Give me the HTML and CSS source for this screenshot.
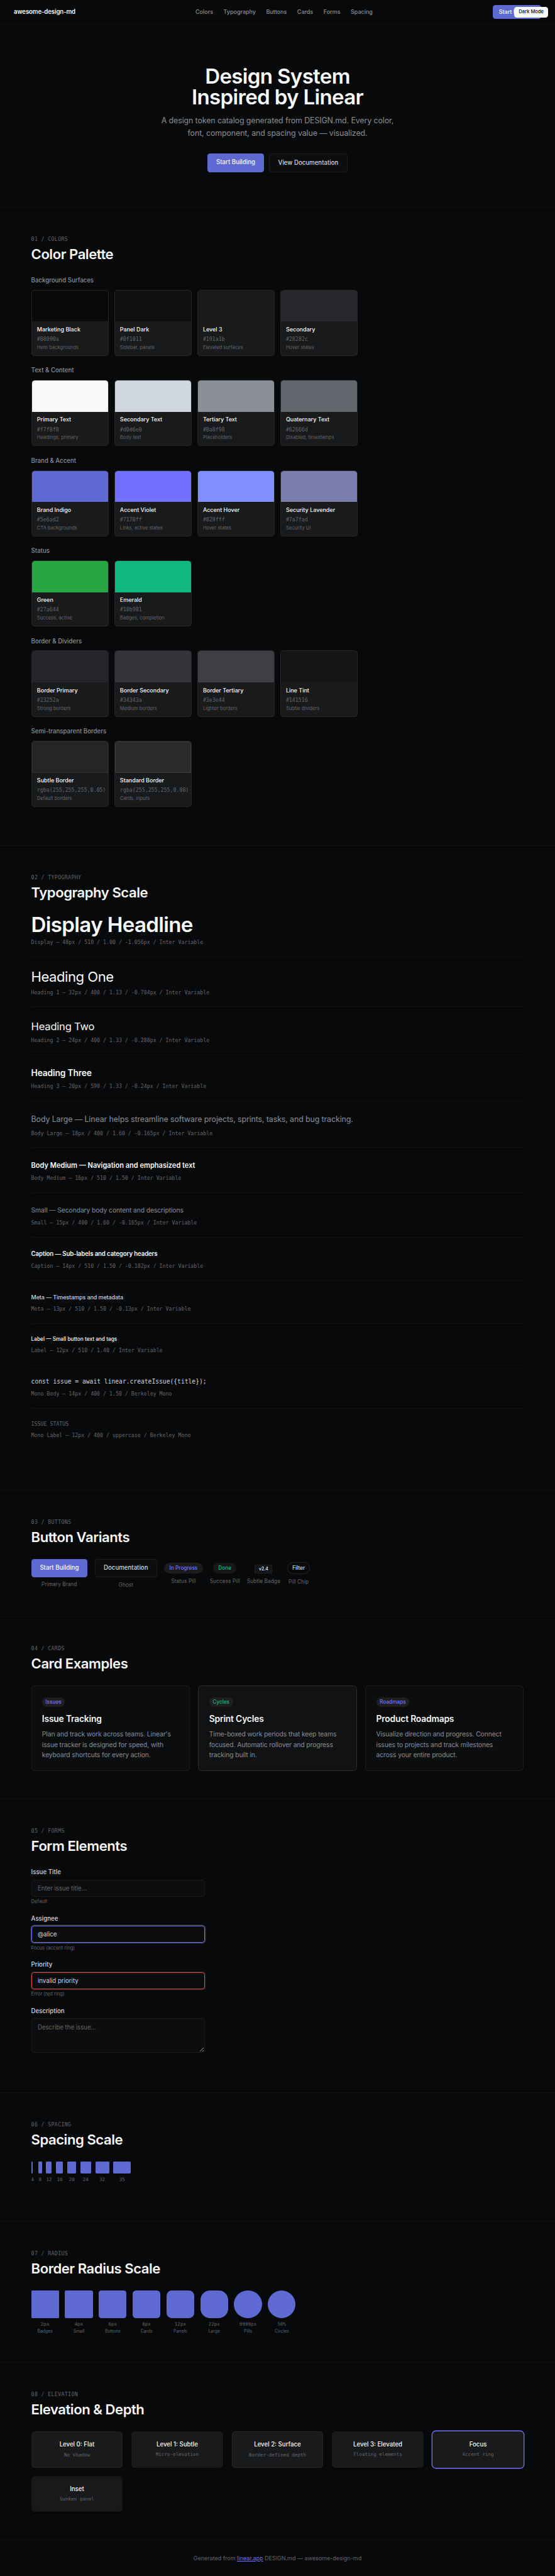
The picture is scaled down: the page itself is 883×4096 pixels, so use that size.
FILE: index.html
```html
<!DOCTYPE html>
<html lang="en">
<head>
    <meta charset="UTF-8">
    <meta name="viewport" content="width=device-width, initial-scale=1.0">
    <title>Design System Inspired by Linear</title>
    <link rel="stylesheet" href="styles.css">
</head>
<body>
<div class="page">
    <nav class="nav">
        <div class="nav-brand">awesome-design-md</div>
        <ul class="nav-links">
            <li><a href="#colors">Colors</a></li>
            <li><a href="#typography">Typography</a></li>
            <li><a href="#buttons">Buttons</a></li>
            <li><a href="#cards">Cards</a></li>
            <li><a href="#forms">Forms</a></li>
            <li><a href="#spacing">Spacing</a></li>
        </ul>
        <a class="nav-cta" href="#">Start Building</a>
    </nav>
    <button class="theme-toggle">Dark Mode</button>

    <header class="hero">
        <h1>Design System<br>Inspired by Linear</h1>
        <p>A design token catalog generated from DESIGN.md. Every color, font, component, and spacing value — visualized.</p>
        <div class="hero-buttons">
            <a class="btn btn-primary" href="#">Start Building</a>
            <a class="btn btn-ghost" href="#">View Documentation</a>
        </div>
    </header>
    <hr class="divider">

    <section class="section" id="colors">
        <div class="section-label">01 / Colors</div>
        <h2>Color Palette</h2>

        <h3 class="group-title">Background Surfaces</h3>
        <div class="color-grid">
            <div class="swatch"><div class="swatch-color marketing-black"></div><div class="swatch-info"><div class="swatch-name">Marketing Black</div><div class="swatch-hex">#08090a</div><div class="swatch-role">Hero backgrounds</div></div></div>
            <div class="swatch"><div class="swatch-color panel-dark"></div><div class="swatch-info"><div class="swatch-name">Panel Dark</div><div class="swatch-hex">#0f1011</div><div class="swatch-role">Sidebar, panels</div></div></div>
            <div class="swatch"><div class="swatch-color level-3"></div><div class="swatch-info"><div class="swatch-name">Level 3</div><div class="swatch-hex">#191a1b</div><div class="swatch-role">Elevated surfaces</div></div></div>
            <div class="swatch"><div class="swatch-color secondary"></div><div class="swatch-info"><div class="swatch-name">Secondary</div><div class="swatch-hex">#28282c</div><div class="swatch-role">Hover states</div></div></div>
        </div>

        <h3 class="group-title">Text &amp; Content</h3>
        <div class="color-grid">
            <div class="swatch"><div class="swatch-color text-primary"></div><div class="swatch-info"><div class="swatch-name">Primary Text</div><div class="swatch-hex">#f7f8f8</div><div class="swatch-role">Headings, primary</div></div></div>
            <div class="swatch"><div class="swatch-color text-secondary"></div><div class="swatch-info"><div class="swatch-name">Secondary Text</div><div class="swatch-hex">#d0d6e0</div><div class="swatch-role">Body text</div></div></div>
            <div class="swatch"><div class="swatch-color text-tertiary"></div><div class="swatch-info"><div class="swatch-name">Tertiary Text</div><div class="swatch-hex">#8a8f98</div><div class="swatch-role">Placeholders</div></div></div>
            <div class="swatch"><div class="swatch-color text-quaternary"></div><div class="swatch-info"><div class="swatch-name">Quaternary Text</div><div class="swatch-hex">#62666d</div><div class="swatch-role">Disabled, timestamps</div></div></div>
        </div>

        <h3 class="group-title">Brand &amp; Accent</h3>
        <div class="color-grid">
            <div class="swatch"><div class="swatch-color indigo"></div><div class="swatch-info"><div class="swatch-name">Brand Indigo</div><div class="swatch-hex">#5e6ad2</div><div class="swatch-role">CTA backgrounds</div></div></div>
            <div class="swatch"><div class="swatch-color violet"></div><div class="swatch-info"><div class="swatch-name">Accent Violet</div><div class="swatch-hex">#7170ff</div><div class="swatch-role">Links, active states</div></div></div>
            <div class="swatch"><div class="swatch-color accent-hover"></div><div class="swatch-info"><div class="swatch-name">Accent Hover</div><div class="swatch-hex">#828fff</div><div class="swatch-role">Hover states</div></div></div>
            <div class="swatch"><div class="swatch-color lavender"></div><div class="swatch-info"><div class="swatch-name">Security Lavender</div><div class="swatch-hex">#7a7fad</div><div class="swatch-role">Security UI</div></div></div>
        </div>

        <h3 class="group-title">Status</h3>
        <div class="color-grid">
            <div class="swatch"><div class="swatch-color green"></div><div class="swatch-info"><div class="swatch-name">Green</div><div class="swatch-hex">#27a644</div><div class="swatch-role">Success, active</div></div></div>
            <div class="swatch"><div class="swatch-color emerald"></div><div class="swatch-info"><div class="swatch-name">Emerald</div><div class="swatch-hex">#10b981</div><div class="swatch-role">Badges, completion</div></div></div>
        </div>

        <h3 class="group-title">Border &amp; Dividers</h3>
        <div class="color-grid">
            <div class="swatch"><div class="swatch-color border-primary"></div><div class="swatch-info"><div class="swatch-name">Border Primary</div><div class="swatch-hex">#23252a</div><div class="swatch-role">Strong borders</div></div></div>
            <div class="swatch"><div class="swatch-color border-secondary"></div><div class="swatch-info"><div class="swatch-name">Border Secondary</div><div class="swatch-hex">#34343a</div><div class="swatch-role">Medium borders</div></div></div>
            <div class="swatch"><div class="swatch-color border-tertiary"></div><div class="swatch-info"><div class="swatch-name">Border Tertiary</div><div class="swatch-hex">#3e3e44</div><div class="swatch-role">Lighter borders</div></div></div>
            <div class="swatch"><div class="swatch-color line-tint"></div><div class="swatch-info"><div class="swatch-name">Line Tint</div><div class="swatch-hex">#141516</div><div class="swatch-role">Subtle dividers</div></div></div>
        </div>

        <h3 class="group-title">Semi-transparent Borders</h3>
        <div class="color-grid">
            <div class="swatch"><div class="swatch-color subtle-border"></div><div class="swatch-info"><div class="swatch-name">Subtle Border</div><div class="swatch-hex">rgba(255,255,255,0.05)</div><div class="swatch-role">Default borders</div></div></div>
            <div class="swatch"><div class="swatch-color standard-border"></div><div class="swatch-info"><div class="swatch-name">Standard Border</div><div class="swatch-hex">rgba(255,255,255,0.08)</div><div class="swatch-role">Cards, inputs</div></div></div>
        </div>
    </section>
    <hr class="divider">

    <section class="section" id="typography">
        <div class="section-label">02 / Typography</div>
        <h2>Typography Scale</h2>
        <div class="type-item"><div class="type-display">Display Headline</div><div class="type-meta">Display — 48px / 510 / 1.00 / -1.056px / Inter Variable</div></div>
        <div class="type-item"><div class="type-h1">Heading One</div><div class="type-meta">Heading 1 — 32px / 400 / 1.13 / -0.704px / Inter Variable</div></div>
        <div class="type-item"><div class="type-h2">Heading Two</div><div class="type-meta">Heading 2 — 24px / 400 / 1.33 / -0.288px / Inter Variable</div></div>
        <div class="type-item"><div class="type-h3">Heading Three</div><div class="type-meta">Heading 3 — 20px / 590 / 1.33 / -0.24px / Inter Variable</div></div>
        <div class="type-item"><div class="type-body-lg">Body Large — Linear helps streamline software projects, sprints, tasks, and bug tracking.</div><div class="type-meta">Body Large — 18px / 400 / 1.60 / -0.165px / Inter Variable</div></div>
        <div class="type-item"><div class="type-body-md">Body Medium — Navigation and emphasized text</div><div class="type-meta">Body Medium — 16px / 510 / 1.50 / Inter Variable</div></div>
        <div class="type-item"><div class="type-small">Small — Secondary body content and descriptions</div><div class="type-meta">Small — 15px / 400 / 1.60 / -0.165px / Inter Variable</div></div>
        <div class="type-item"><div class="type-caption">Caption — Sub-labels and category headers</div><div class="type-meta">Caption — 14px / 510 / 1.50 / -0.182px / Inter Variable</div></div>
        <div class="type-item"><div class="type-metadata">Meta — Timestamps and metadata</div><div class="type-meta">Meta — 13px / 510 / 1.50 / -0.13px / Inter Variable</div></div>
        <div class="type-item"><div class="type-label">Label — Small button text and tags</div><div class="type-meta">Label — 12px / 510 / 1.40 / Inter Variable</div></div>
        <div class="type-item"><div class="type-mono">const issue = await linear.createIssue({title});</div><div class="type-meta">Mono Body — 14px / 400 / 1.50 / Berkeley Mono</div></div>
        <div class="type-item"><div class="type-mono-label">Issue Status</div><div class="type-meta">Mono Label — 12px / 400 / uppercase / Berkeley Mono</div></div>
    </section>
    <hr class="divider">

    <section class="section" id="buttons">
        <div class="section-label">03 / Buttons</div>
        <h2>Button Variants</h2>
        <div class="button-row">
            <div class="button-item"><a class="btn btn-primary" href="#">Start Building</a><div class="button-label">Primary Brand</div></div>
            <div class="button-item"><a class="btn btn-ghost" href="#">Documentation</a><div class="button-label">Ghost</div></div>
            <div class="button-item"><span class="pill pill-accent">In Progress</span><div class="button-label">Status Pill</div></div>
            <div class="button-item"><span class="pill pill-success">Done</span><div class="button-label">Success Pill</div></div>
            <div class="button-item"><span class="badge">v2.4</span><div class="button-label">Subtle Badge</div></div>
            <div class="button-item"><span class="chip">Filter</span><div class="button-label">Pill Chip</div></div>
        </div>
    </section>
    <hr class="divider">

    <section class="section" id="cards">
        <div class="section-label">04 / Cards</div>
        <h2>Card Examples</h2>
        <div class="card-grid">
            <div class="card">
                <div class="card-tag"><span class="pill pill-accent pill-sm">Issues</span></div>
                <h3>Issue Tracking</h3>
                <p>Plan and track work across teams. Linear's issue tracker is designed for speed, with keyboard shortcuts for every action.</p>
            </div>
            <div class="card card-featured">
                <div class="card-tag"><span class="pill pill-success pill-sm">Cycles</span></div>
                <h3>Sprint Cycles</h3>
                <p>Time-boxed work periods that keep teams focused. Automatic rollover and progress tracking built in.</p>
            </div>
            <div class="card">
                <div class="card-tag"><span class="pill pill-accent pill-sm">Roadmaps</span></div>
                <h3>Product Roadmaps</h3>
                <p>Visualize direction and progress. Connect issues to projects and track milestones across your entire product.</p>
            </div>
        </div>
    </section>
    <hr class="divider">

    <section class="section" id="forms">
        <div class="section-label">05 / Forms</div>
        <h2>Form Elements</h2>
        <div class="form">
            <div class="form-group">
                <label for="title">Issue Title</label>
                <input type="text" id="title" placeholder="Enter issue title...">
                <div class="form-hint">Default</div>
            </div>
            <div class="form-group">
                <label for="assignee">Assignee</label>
                <input type="text" id="assignee" class="is-focus" value="@alice">
                <div class="form-hint">Focus (accent ring)</div>
            </div>
            <div class="form-group">
                <label for="priority">Priority</label>
                <input type="text" id="priority" class="is-error" value="invalid priority">
                <div class="form-hint">Error (red ring)</div>
            </div>
            <div class="form-group">
                <label for="description">Description</label>
                <textarea id="description" placeholder="Describe the issue..."></textarea>
            </div>
        </div>
    </section>
    <hr class="divider">

    <section class="section" id="spacing">
        <div class="section-label">06 / Spacing</div>
        <h2>Spacing Scale</h2>
        <div class="spacing-row">
            <div class="spacing-item"><div class="spacing-bar" style="width: 4px"></div><span>4</span></div>
            <div class="spacing-item"><div class="spacing-bar" style="width: 8px"></div><span>8</span></div>
            <div class="spacing-item"><div class="spacing-bar" style="width: 12px"></div><span>12</span></div>
            <div class="spacing-item"><div class="spacing-bar" style="width: 16px"></div><span>16</span></div>
            <div class="spacing-item"><div class="spacing-bar" style="width: 20px"></div><span>20</span></div>
            <div class="spacing-item"><div class="spacing-bar" style="width: 24px"></div><span>24</span></div>
            <div class="spacing-item"><div class="spacing-bar" style="width: 32px"></div><span>32</span></div>
            <div class="spacing-item"><div class="spacing-bar" style="width: 40px"></div><span>35</span></div>
        </div>
    </section>
    <hr class="divider">

    <section class="section" id="radius">
        <div class="section-label">07 / Radius</div>
        <h2>Border Radius Scale</h2>
        <div class="radius-row">
            <div class="radius-item"><div class="radius-box" style="border-radius: 2px"></div><div class="radius-value">2px</div><div class="radius-name">Badges</div></div>
            <div class="radius-item"><div class="radius-box" style="border-radius: 4px"></div><div class="radius-value">4px</div><div class="radius-name">Small</div></div>
            <div class="radius-item"><div class="radius-box" style="border-radius: 6px"></div><div class="radius-value">6px</div><div class="radius-name">Buttons</div></div>
            <div class="radius-item"><div class="radius-box" style="border-radius: 8px"></div><div class="radius-value">8px</div><div class="radius-name">Cards</div></div>
            <div class="radius-item"><div class="radius-box" style="border-radius: 12px"></div><div class="radius-value">12px</div><div class="radius-name">Panels</div></div>
            <div class="radius-item"><div class="radius-box" style="border-radius: 22px"></div><div class="radius-value">22px</div><div class="radius-name">Large</div></div>
            <div class="radius-item"><div class="radius-box" style="border-radius: 9999px"></div><div class="radius-value">9999px</div><div class="radius-name">Pills</div></div>
            <div class="radius-item"><div class="radius-box" style="border-radius: 50%"></div><div class="radius-value">50%</div><div class="radius-name">Circles</div></div>
        </div>
    </section>
    <hr class="divider">

    <section class="section" id="elevation">
        <div class="section-label">08 / Elevation</div>
        <h2>Elevation &amp; Depth</h2>
        <div class="elevation-grid">
            <div class="elevation-card elevation-flat"><div class="elevation-name">Level 0: Flat</div><div class="elevation-desc">No shadow</div></div>
            <div class="elevation-card elevation-subtle"><div class="elevation-name">Level 1: Subtle</div><div class="elevation-desc">Micro-elevation</div></div>
            <div class="elevation-card elevation-surface"><div class="elevation-name">Level 2: Surface</div><div class="elevation-desc">Border-defined depth</div></div>
            <div class="elevation-card elevation-elevated"><div class="elevation-name">Level 3: Elevated</div><div class="elevation-desc">Floating elements</div></div>
            <div class="elevation-card elevation-focus"><div class="elevation-name">Focus</div><div class="elevation-desc">Accent ring</div></div>
            <div class="elevation-card elevation-inset"><div class="elevation-name">Inset</div><div class="elevation-desc">Sunken panel</div></div>
        </div>
    </section>

    <footer class="footer">Generated from <a href="#">linear.app</a> DESIGN.md — awesome-design-md</footer>
</div>
</body>
</html>
```
FILE: styles.css
```css
* {
    margin: 0;
    padding: 0;
    box-sizing: border-box;
}
body {
    background: #08090a;
}
/* laid out at 1280px, shown at 69%.
   Borders stay a full pixel at this zoom, so bordered boxes
   give 0.45px back in their padding. */
.page {
    position: relative;
    zoom: 0.69;
    background: #08090a;
    color: #f7f8f8;
    font-family: Inter, sans-serif;
    font-size: 16px;
    line-height: 1.5;
}
a {
    text-decoration: none;
}

/* Nav */
.nav {
    display: flex;
    align-items: center;
    justify-content: space-between;
    padding: 12px 32px 11.55px;
    border-bottom: 1px solid rgba(255,255,255,0.04);
}
.nav-brand {
    font-size: 14px;
    font-weight: 590;
    letter-spacing: -0.182px;
}
.nav-links {
    display: flex;
    gap: 24px;
    list-style: none;
    font-size: 13px;
    font-weight: 510;
}
.nav-links a {
    color: #8a8f98;
}
.nav-cta {
    padding: 6px 14px;
    border-radius: 6px;
    background: #5e6ad2;
    color: #f7f8f8;
    font-size: 13px;
    font-weight: 510;
}
.theme-toggle {
    position: absolute;
    top: 16px;
    right: 16px;
    padding: 6px 10px;
    border: none;
    border-radius: 6px;
    background: #f7f8f8;
    color: #08090a;
    font-family: inherit;
    font-size: 11px;
    font-weight: 510;
    line-height: 13px;
}

/* Hero */
.hero {
    padding: 96px 32px 80px;
    text-align: center;
}
.hero h1 {
    font-size: 48px;
    font-weight: 570;
    line-height: 1;
    letter-spacing: -1px;
    margin-bottom: 16px;
}
.hero p {
    max-width: 560px;
    margin: 0 auto 32px;
    color: #8a8f98;
    font-size: 18px;
    line-height: 1.6;
    letter-spacing: -0.165px;
}
.hero-buttons {
    display: flex;
    justify-content: center;
    gap: 12px;
}
.btn {
    display: inline-block;
    padding: 10px 20px;
    border-radius: 6px;
    font-size: 14px;
    font-weight: 550;
}
.btn-primary {
    background: #5e6ad2;
    color: #f7f8f8;
}
.btn-ghost {
    padding: 9.55px 19.55px;
    background: rgba(255,255,255,0.02);
    border: 1px solid rgba(255,255,255,0.07);
    color: #d0d6e0;
}

/* Sections */
.divider {
    height: 0;
    margin-bottom: -0.45px;
    border: none;
    border-top: 1px solid rgba(255,255,255,0.04);
}
.section {
    max-width: 1200px;
    margin: 0 auto;
    padding: 64px 32px;
}
.section-label {
    margin-bottom: 8px;
    color: #62666d;
    font-family: "DejaVu Sans Mono", monospace;
    font-size: 12px;
    letter-spacing: 0.5px;
    text-transform: uppercase;
}
.section h2 {
    margin-bottom: 32px;
    font-size: 32px;
    font-weight: 570;
    line-height: 1.13;
    letter-spacing: -0.67px;
}

/* Colors */
.group-title {
    margin-bottom: 12px;
    color: #8a8f98;
    font-size: 14px;
    font-weight: 510;
    line-height: 19.5px;
}
.color-grid {
    display: grid;
    grid-template-columns: repeat(6, 1fr);
    gap: 12px;
    margin-bottom: 24px;
}
.swatch {
    overflow: hidden;
    border: 1px solid rgba(255,255,255,0.06);
    border-radius: 8px;
    background: #191a1b;
}
.swatch-color {
    height: 72px;
}
.swatch-info {
    padding: 9.55px 12px;
}
.swatch-name {
    margin-bottom: 4px;
    font-size: 13px;
    font-weight: 510;
    line-height: 18px;
}
.swatch-hex {
    margin-bottom: 2px;
    color: #62666d;
    font-family: "DejaVu Sans Mono", monospace;
    font-size: 12px;
}
.swatch-role {
    color: #62666d;
    font-size: 11px;
}
.marketing-black { background: #08090a; }
.panel-dark { background: #0f1011; }
.level-3 { background: #191a1b; }
.secondary { background: #28282c; }
.text-primary { background: #f7f8f8; }
.text-secondary { background: #d0d6e0; }
.text-tertiary { background: #8a8f98; }
.text-quaternary { background: #62666d; }
.indigo { background: #5e6ad2; }
.violet { background: #7170ff; }
.accent-hover { background: #828fff; }
.lavender { background: #7a7fad; }
.green { background: #27a644; }
.emerald { background: #10b981; }
.border-primary { background: #23252a; }
.border-secondary { background: #34343a; }
.border-tertiary { background: #3e3e44; }
.line-tint { background: #141516; }
.subtle-border {
    background: rgba(255,255,255,0.05);
    border: 1px solid rgba(255,255,255,0.05);
}
.standard-border {
    background: rgba(255,255,255,0.08);
    border: 1px solid rgba(255,255,255,0.08);
}

/* Typography */
.type-item {
    margin-bottom: 28px;
    padding-bottom: 23.65px;
    border-bottom: 1px solid rgba(255,255,255,0.04);
}
.type-item:last-child {
    padding-bottom: 24px;
    border-bottom: none;
}
.type-meta {
    margin-top: 8px;
    color: #62666d;
    font-family: "DejaVu Sans Mono", monospace;
    font-size: 12px;
}
.type-display { font-size: 48px; font-weight: 570; line-height: 1; letter-spacing: -0.96px; }
.type-h1 { font-size: 32px; font-weight: 400; line-height: 1.13; letter-spacing: -0.704px; }
.type-h2 { font-size: 24px; font-weight: 400; line-height: 1.33; letter-spacing: -0.288px; }
.type-h3 { font-size: 20px; font-weight: 590; line-height: 1.33; letter-spacing: -0.24px; }
.type-body-lg { font-size: 18px; line-height: 1.6; letter-spacing: -0.165px; color: #8a8f98; }
.type-body-md { font-size: 16px; font-weight: 570; }
.type-small { font-size: 15px; line-height: 1.6; letter-spacing: -0.165px; color: #8a8f98; }
.type-caption { font-size: 14px; font-weight: 560; letter-spacing: -0.182px; }
.type-metadata { font-size: 13px; font-weight: 550; letter-spacing: -0.13px; color: #d0d6e0; }
.type-label { font-size: 12px; font-weight: 550; line-height: 1.4; }
.type-mono { font-family: "DejaVu Sans Mono", monospace; font-size: 14px; color: #d0d6e0; }
.type-mono-label {
    color: #62666d;
    font-family: "DejaVu Sans Mono", monospace;
    font-size: 12px;
    line-height: 1.4;
    text-transform: uppercase;
}

/* Buttons */
.button-row {
    display: flex;
    align-items: center;
    gap: 16.5px;
}
.button-item {
    text-align: center;
}
.button-label {
    margin-top: 8px;
    color: #62666d;
    font-size: 12px;
    letter-spacing: 0.1px;
}
.pill {
    display: inline-block;
    padding: 4px 12px;
    border-radius: 9999px;
    font-size: 12px;
    font-weight: 550;
}
.pill-sm {
    padding: 2px 8px;
}
.pill-accent {
    background: rgba(255,255,255,0.08);
    color: #7170ff;
}
.pill-success {
    background: rgba(255,255,255,0.06);
    color: #10b981;
}
.badge {
    display: inline-block;
    padding: 1.55px 8px;
    border: 1px solid rgba(255,255,255,0.05);
    border-radius: 2px;
    background: rgba(255,255,255,0.05);
    font-size: 10px;
    font-weight: 550;
}
.chip {
    display: inline-block;
    padding: 3.55px 10px;
    border: 1px solid #23252a;
    border-radius: 9999px;
    color: #d0d6e0;
    font-size: 12px;
    font-weight: 550;
}

/* Cards */
.card-grid {
    display: grid;
    grid-template-columns: repeat(3, 1fr);
    gap: 20px;
}
.card {
    padding: 23.55px;
    border: 1px solid rgba(255,255,255,0.06);
    border-radius: 8px;
    background: rgba(255,255,255,0.02);
}
.card-featured {
    border-color: #2c2c31;
    background: rgba(255,255,255,0.04);
}
.card-tag {
    margin-bottom: 14.4px;
}
.card h3 {
    margin-bottom: 10px;
    font-size: 20px;
    font-weight: 560;
    line-height: 1.33;
    letter-spacing: -0.24px;
}
.card p {
    color: #8a8f98;
    font-size: 15px;
    line-height: 1.6;
    letter-spacing: -0.165px;
}

/* Forms */
.form {
    max-width: 400px;
}
.form-group {
    margin-bottom: 20px;
}
.form-group label {
    display: block;
    margin-bottom: 6px;
    color: #d0d6e0;
    font-size: 14px;
    font-weight: 510;
}
.form-group input,
.form-group textarea {
    width: 100%;
    height: 39px;
    padding: 9.55px 13.55px;
    border: 1px solid rgba(255,255,255,0.06);
    border-radius: 6px;
    outline: none;
    background: rgba(255,255,255,0.02);
    color: #d0d6e0;
    font-family: inherit;
    font-size: 14px;
}
.form-group input {
    display: block;
}
.form-group textarea {
    height: 80px;
    line-height: 1.5;
    resize: vertical;
}
.form-group ::placeholder {
    color: #62666d;
}
.form-group .is-focus {
    border-color: #7170ff;
    box-shadow: 0 0 0 2px rgba(255,255,255,0.2);
}
.form-group .is-error {
    border-color: #e5484d;
    box-shadow: 0 0 0 2px rgba(255,255,255,0.1);
}
.form-hint {
    margin-top: 4px;
    color: #62666d;
    font-size: 11px;
}

/* Spacing */
.spacing-row {
    display: flex;
    gap: 10px;
    margin-bottom: 24px;
}
.spacing-item {
    color: #62666d;
    font-family: "DejaVu Sans Mono", monospace;
    font-size: 11px;
    text-align: center;
}
.spacing-item span {
    display: block;
}
.spacing-bar {
    height: 28px;
    margin-bottom: 6px;
    border-radius: 2px;
    background: #5e6ad2;
}

/* Radius */
.radius-row {
    display: flex;
    gap: 14px;
}
.radius-item {
    color: #62666d;
    text-align: center;
}
.radius-box {
    width: 64px;
    height: 64px;
    margin-bottom: 6px;
    background: #5e6ad2;
}
.radius-value {
    font-family: "DejaVu Sans Mono", monospace;
    font-size: 11px;
}
.radius-name {
    font-size: 10px;
}

/* Elevation */
.elevation-grid {
    display: grid;
    grid-template-columns: repeat(5, 1fr);
    gap: 20px;
}
.elevation-card {
    padding: 20px;
    border-radius: 8px;
    background: #191a1b;
    text-align: center;
}
.elevation-name {
    margin-bottom: 4px;
    font-size: 14px;
    font-weight: 510;
}
.elevation-desc {
    color: #62666d;
    font-family: "DejaVu Sans Mono", monospace;
    font-size: 11px;
}
.elevation-flat { padding: 19.55px; border: 1px solid rgba(255,255,255,0.04); }
.elevation-subtle { box-shadow: rgba(0,0,0,0.03) 0 1px 2px; }
.elevation-surface { padding: 19.55px; border: 1px solid rgba(255,255,255,0.06); }
.elevation-elevated { box-shadow: rgba(0,0,0,0.4) 0 2px 4px; }
.elevation-focus { box-shadow: 0 0 0 2px #7170ff; }
.elevation-inset { box-shadow: rgba(0,0,0,0.2) 0 0 12px inset; }

/* Footer */
.footer {
    padding: 31.55px 32px 29px;
    border-top: 1px solid rgba(255,255,255,0.04);
    color: #62666d;
    font-size: 13px;
    text-align: center;
}
.footer a {
    color: #7170ff;
    text-decoration: underline;
}
```
